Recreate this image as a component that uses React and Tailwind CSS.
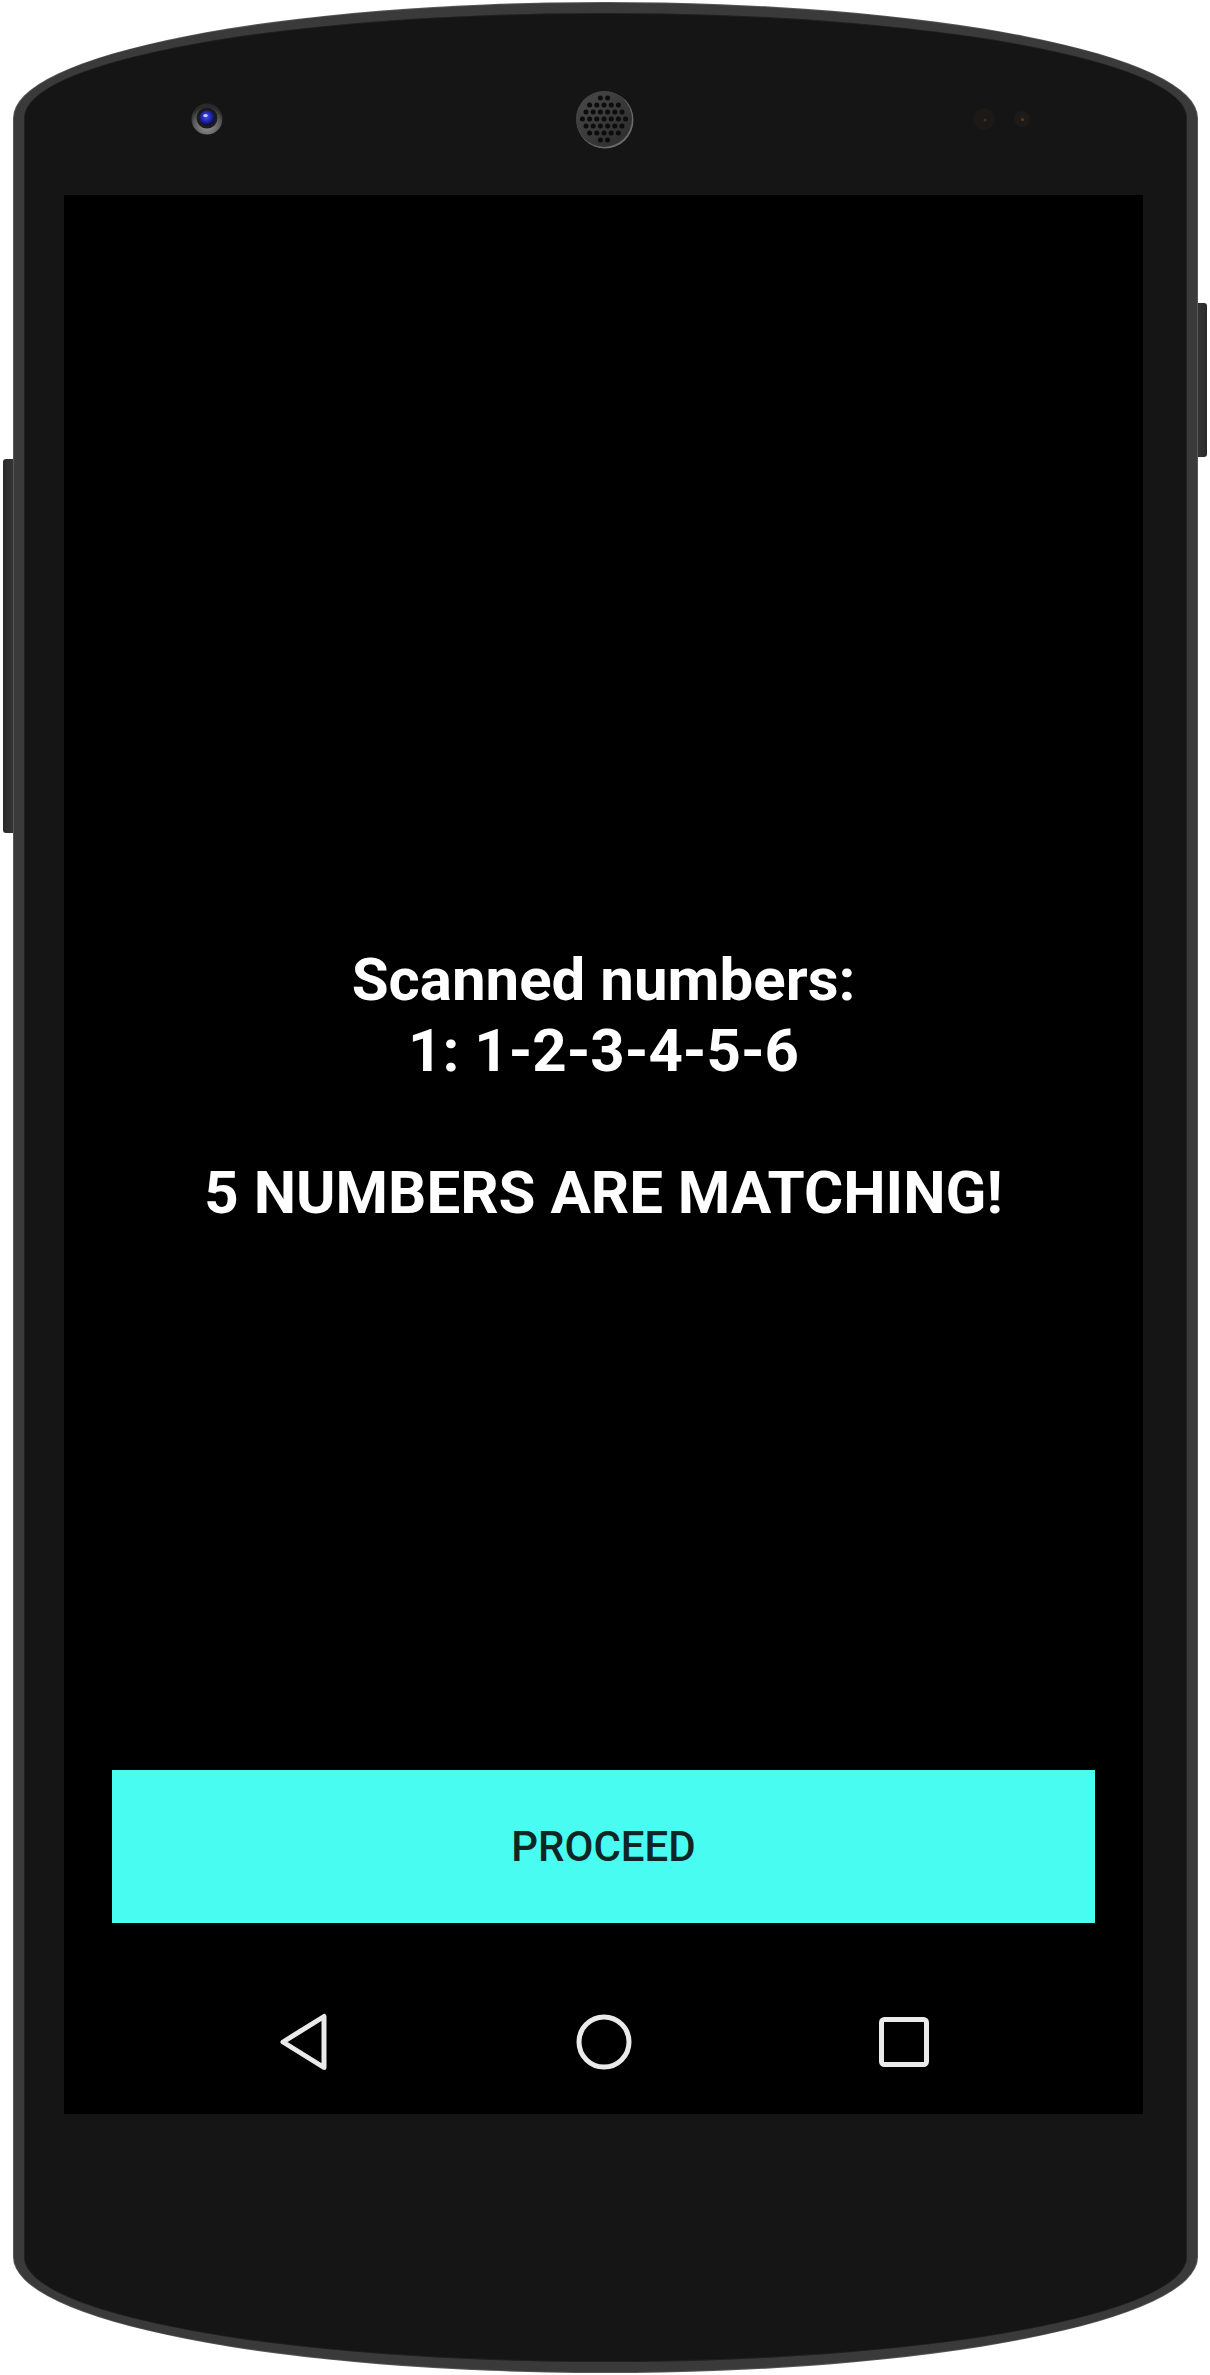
import React from "react";

const speakerHoles = (() => {
  const holes = [];
  for (let row = -3; row <= 3; row++) {
    const y = row * 7;
    const offset = row % 2 === 0 ? 0 : 3.6;
    for (let col = -4; col <= 4; col++) {
      const x = col * 7.2 + offset;
      if (Math.sqrt(x * x + y * y) < 23) holes.push([x, y]);
    }
  }
  return holes;
})();

function Camera() {
  return (
    <svg width="32" height="32" viewBox="0 0 32 32">
      <defs>
        <radialGradient id="camRing" cx="50%" cy="70%" r="60%">
          <stop offset="0%" stopColor="#9a9a9a" />
          <stop offset="70%" stopColor="#5a5a5a" />
          <stop offset="100%" stopColor="#2a2a2a" />
        </radialGradient>
        <radialGradient id="lens" cx="45%" cy="40%" r="60%">
          <stop offset="0%" stopColor="#4a52ff" />
          <stop offset="60%" stopColor="#1e22a8" />
          <stop offset="100%" stopColor="#0a0a3a" />
        </radialGradient>
      </defs>
      <circle cx="16" cy="16" r="15.5" fill="url(#camRing)" />
      <circle cx="16" cy="15" r="10.5" fill="#1b1b1b" />
      <circle cx="16" cy="15" r="7.5" fill="url(#lens)" />
      <ellipse cx="14.5" cy="12.5" rx="2.2" ry="1.6" fill="#ffffff" opacity="0.75" />
    </svg>
  );
}

function Speaker() {
  return (
    <svg width="60" height="60" viewBox="-30 -30 60 60">
      <defs>
        <linearGradient id="spk" x1="0" y1="0" x2="1" y2="1">
          <stop offset="0%" stopColor="#4a4a4a" />
          <stop offset="50%" stopColor="#3a3a3a" />
          <stop offset="100%" stopColor="#2a2a2a" />
        </linearGradient>
      </defs>
      <circle cx="1" cy="1" r="28.5" fill="#6a6a6a" />
      <circle cx="0" cy="0" r="28" fill="url(#spk)" />
      {speakerHoles.map(([x, y], i) => (
        <circle key={i} cx={x} cy={y} r="2.5" fill="#0c0c0c" />
      ))}
    </svg>
  );
}

function Sensors() {
  return (
    <div className="flex items-center gap-[19px]">
      <svg width="22" height="22" viewBox="0 0 22 22">
        <circle cx="11" cy="11" r="11" fill="#1b1a19" />
        <circle cx="12" cy="12" r="1.5" fill="#5a3a1a" opacity="0.7" />
      </svg>
      <svg width="16" height="16" viewBox="0 0 16 16">
        <circle cx="8" cy="8" r="8" fill="#1d1b1a" />
        <circle cx="8.5" cy="8.5" r="1.6" fill="#6a3f18" opacity="0.8" />
      </svg>
    </div>
  );
}

function NavBar() {
  return (
    <div className="h-[144px] flex items-center justify-center">
      <div className="w-[300px] flex justify-center">
        <svg width="50" height="60" viewBox="0 0 50 60">
          <path
            d="M45 4.5 L45 55.5 L4 30 Z"
            fill="none"
            stroke="#eaeaea"
            strokeWidth="5"
            strokeLinejoin="round"
          />
        </svg>
      </div>
      <div className="w-[300px] flex justify-center">
        <svg width="58" height="58" viewBox="0 0 58 58">
          <circle cx="29" cy="29" r="25" fill="none" stroke="#eaeaea" strokeWidth="5" />
        </svg>
      </div>
      <div className="w-[300px] flex justify-center">
        <svg width="52" height="52" viewBox="0 0 52 52">
          <rect x="3.5" y="3.5" width="45" height="45" rx="3" fill="none" stroke="#eaeaea" strokeWidth="5" />
        </svg>
      </div>
    </div>
  );
}

export default function App() {
  return (
    <div className="relative w-[1210px] h-[2375px] bg-white pt-[3px] pl-[14px] font-['Roboto',_'Liberation_Sans',_sans-serif]">
      {/* side keys */}
      <div className="absolute left-[3px] top-[459px] w-[16px] h-[374px] rounded-l-[3px] bg-gradient-to-r from-[#2a2a2a] to-[#3a3a3a]"></div>
      <div className="absolute left-[1192px] top-[303px] w-[15px] h-[154px] rounded-r-[3px] bg-gradient-to-r from-[#3a3a3a] to-[#2a2a2a]"></div>

      <div className="relative z-10 w-[1183px] h-[2369px] rounded-[50%/115px] border-[10px] border-[#3a3a3a] bg-[#151515] shadow-[0_0_0_1px_#575757,inset_0_0_0_1px_#202020]">
        <div className="h-[182px] pt-[76px]">
          <div className="h-[60px] flex items-center">
            <div className="ml-[167px]">
              <Camera />
            </div>
            <div className="ml-[351px]">
              <Speaker />
            </div>
            <div className="ml-[339px]">
              <Sensors />
            </div>
          </div>
        </div>

        <div className="ml-[40px] w-[1079px] h-[1919px] bg-black flex flex-col">
          <div className="pt-[749px] text-white text-center font-bold text-[60px] leading-[71px]">
            <p>Scanned numbers:</p>
            <p>1: 1-2-3-4-5-6</p>
            <p className="h-[71px]"></p>
            <p>5 NUMBERS ARE MATCHING!</p>
          </div>
          <div className="flex-1"></div>
          <button className="mx-[48px] h-[153px] bg-[#48fcf1] text-[#102625] text-[42px] font-medium">
            PROCEED
          </button>
          <div className="h-[47px]"></div>
          <NavBar />
        </div>
      </div>
    </div>
  );
}
